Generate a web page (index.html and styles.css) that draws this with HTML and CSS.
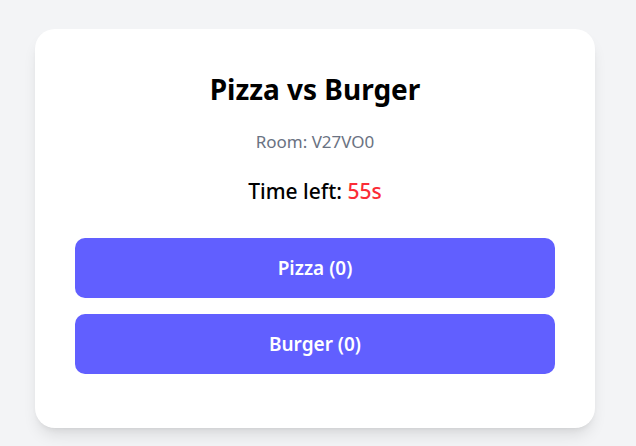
FILE: index.html
```html
<!DOCTYPE html>
<html lang="en">
<head>
<meta charset="utf-8">
<title>Pizza vs Burger</title>
<link rel="stylesheet" href="styles.css">
</head>
<body>
  <main class="card">
    <h1 class="title">Pizza vs Burger</h1>
    <p class="room">Room: V27VO0</p>
    <p class="timer">Time left: <span class="seconds">55s</span></p>
    <div class="options">
      <button class="vote">Pizza (0)</button>
      <button class="vote">Burger (0)</button>
    </div>
  </main>
</body>
</html>
```
FILE: styles.css
```css
html, body {
  margin: 0;
  padding: 0;
}
body {
  background: #f3f4f6;
  font-family: "Segoe UI", "Noto Sans", sans-serif;
  display: flex;
  justify-content: center;
  align-items: flex-start;
  padding: 29px 6px 0 0;
  min-height: 446px;
  box-sizing: border-box;
}
.card {
  width: 560px;
  box-sizing: border-box;
  background: #ffffff;
  border-radius: 20px;
  box-shadow: 0 10px 15px -3px rgba(0,0,0,0.1), 0 4px 6px -4px rgba(0,0,0,0.1);
  padding: 40px 40px 54px;
  text-align: center;
}
.title {
  margin: 0 0 21px;
  font-size: 28px;
  line-height: 40px;
  font-weight: 700;
  color: #000;
}
.room {
  margin: 0 0 23px;
  font-size: 17px;
  line-height: 24px;
  color: #6a7282;
}
.timer {
  margin: 0 0 33px;
  font-size: 21px;
  line-height: 28px;
  font-weight: 500;
  color: #000;
}
.seconds {
  color: #fb2c36;
}
.options {
  display: flex;
  flex-direction: column;
  gap: 16px;
}
.vote {
  display: block;
  width: 100%;
  height: 60px;
  border: none;
  border-radius: 10px;
  background: #615fff;
  color: #ffffff;
  font-family: inherit;
  font-size: 19px;
  line-height: 28px;
  font-weight: 600;
  cursor: pointer;
}
```
